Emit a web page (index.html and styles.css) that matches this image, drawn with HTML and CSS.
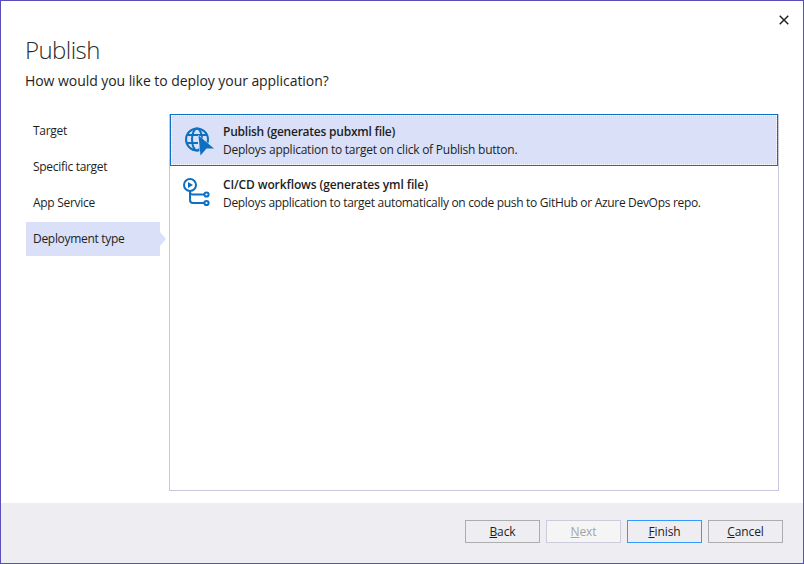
FILE: index.html
```html
<!DOCTYPE html>
<html lang="en">
<head>
<meta charset="utf-8">
<title>Publish</title>
<link rel="stylesheet" href="styles.css">
</head>
<body>
<div class="window">
  <div class="titlebar">
    <button class="close" aria-label="Close">
      <svg width="10" height="10" viewBox="0 0 10 10"><path d="M.7.7l8.6 8.6M9.300.7L.7 9.300" stroke="#1e1e1e" stroke-width="1.4" fill="none"/></svg>
    </button>
  </div>
  <div class="head">
    <h1 class="title">Publish</h1>
    <p class="subtitle">How would you like to deploy your application?</p>
  </div>
  <div class="main">
    <nav class="steps">
      <div class="step">Target</div>
      <div class="step">Specific target</div>
      <div class="step">App Service</div>
      <div class="step current">Deployment type</div>
    </nav>
    <div class="panel">
      <div class="option selected">
        <svg class="icon" width="32" height="32" viewBox="0 0 32 32" fill="none" stroke="#0e70c0" stroke-width="2">
          <circle cx="16" cy="14.500" r="11"/>
          <ellipse cx="16" cy="14.500" rx="5" ry="11"/>
          <path d="M6 10h20M6 18h11"/>
          <path class="cursor" d="M17.500 10.500L33 23.500 25.500 23.500 19.500 30.500Z"/>
        </svg>
        <div class="texts">
          <div class="name">Publish (generates pubxml file)</div>
          <div class="desc">Deploys application to target on click of Publish button.</div>
        </div>
      </div>
      <div class="option">
        <svg class="icon" width="32" height="32" viewBox="0 0 32 32" fill="none" stroke="#0e70c0" stroke-width="2">
          <circle cx="9" cy="7" r="6"/>
          <path d="M7 4v6l5-3Z" fill="#0e70c0" stroke="none"/>
          <path d="M9 13v9q0 3 3 3h11"/>
          <path d="M9 14q0 2.500 3 2.500h11"/>
          <circle cx="25.500" cy="16.500" r="2.100"/>
          <circle cx="25.500" cy="25" r="2.100"/>
        </svg>
        <div class="texts">
          <div class="name wide">CI/CD workflows (generates yml file)</div>
          <div class="desc tight">Deploys application to target automatically on code push to GitHub or Azure DevOps repo.</div>
        </div>
      </div>
    </div>
  </div>
  <div class="footer">
    <button class="btn"><u>B</u>ack</button>
    <button class="btn disabled"><u>N</u>ext</button>
    <button class="btn primary"><u>F</u>inish</button>
    <button class="btn"><u>C</u>ancel</button>
  </div>
</div>
</body>
</html>
```
FILE: styles.css
```css
* { box-sizing: border-box; }
html, body { margin: 0; height: 100%; }
body { font-family: "Open Sans", "Noto Sans", sans-serif; color: #1e1e1e; background: #fff; }
.window {
  width: 804px; height: 564px;
  border: 1px solid #5a4fb8;
  display: flex; flex-direction: column;
  background: #fff;
}
.titlebar { height: 29px; display: flex; justify-content: flex-end; padding: 14px 14px 0 0; flex: none; }
.close { width: 10px; height: 10px; padding: 0; border: 0; background: none; display: block; line-height: 0; }
.head { padding: 0 0 0 24px; flex: none; height: 84px; }
.title { margin: 0; font-size: 24px; font-weight: 300; line-height: 32px; letter-spacing: -.55px; color: #2b2b2b; padding-top: 4px; height: 37px; box-sizing: border-box; }
.subtitle { margin: 0; font-size: 14px; line-height: 24px; letter-spacing: -.06px; color: #1e1e1e; padding-top: 2px; }
.main { flex: 1; display: flex; padding: 0 24px 12px 25px; min-height: 0; }
.steps { width: 143px; flex: none; display: flex; flex-direction: column; gap: 2px; }
.step { width: 134px; height: 34px; padding-left: 7px; font-size: 12px; line-height: 34px; letter-spacing: -.3px; position: relative; }
.step.current { background: #d9e0f8; }
.step.current::after {
  content: ""; position: absolute; left: 134px; top: 10px;
  border-left: 6px solid #d9e0f8; border-top: 7px solid transparent; border-bottom: 7px solid transparent;
}
.panel { flex: 1; border: 1px solid #c8c8dc; }
.option { display: flex; height: 52px; padding: 10px 0 0 11px; gap: 10px; }
.option.selected { margin-top: -1px; padding: 8px 0 0 10px; background: #d9e0f8; border: 1px solid #0e70c0; outline: 1px dotted #fff; outline-offset: -2px; }
.icon { flex: none; margin-top: 2px; overflow: visible; }
.cursor { fill: #0e70c0; stroke: #d9e0f8; stroke-width: 1; paint-order: stroke; }
.name { font-size: 12px; font-weight: 600; line-height: 18px; letter-spacing: -.23px; }
.name.wide { letter-spacing: -.12px; }
.desc { font-size: 12px; line-height: 18px; letter-spacing: -.24px; }
.desc.tight { letter-spacing: -.31px; }
.footer {
  height: 60px; flex: none; background: #eeeef2;
  display: flex; justify-content: flex-end; gap: 6px; padding: 17px 20px 0 0;
}
.btn {
  width: 75px; height: 23px; padding: 0; font: inherit; font-size: 12px; letter-spacing: -.1px;
  background: #eeeef2; border: 1px solid #adadad; color: #1e1e1e; line-height: 21px;
}
.btn.disabled { background: #f5f5f5; border-color: #ccccdc; color: #a2a4a5; }
.btn.primary { border-color: #3399ff; }
```
